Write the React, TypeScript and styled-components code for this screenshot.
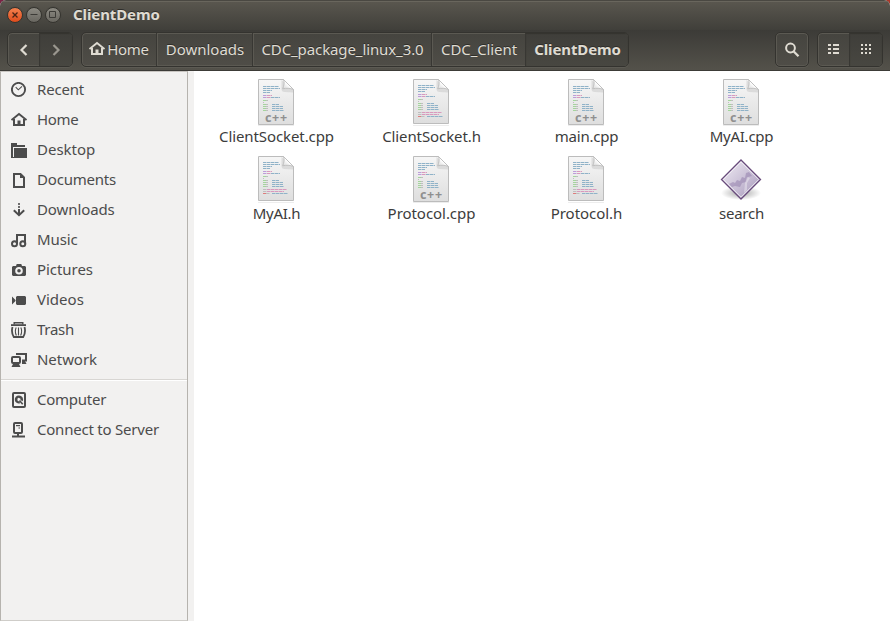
import React from "react";
import styled, { createGlobalStyle, css } from "styled-components";

const Global = createGlobalStyle`
  * { box-sizing: border-box; }
  html, body { margin: 0; padding: 0; }
  body { background: linear-gradient(90deg, #7b2445 0 50%, #ab392b 50%); overflow: hidden; }
  svg { display: block; flex: none; }
`;

const Window = styled.div`
  display: flex;
  flex-direction: column;
  width: 890px;
  height: 621px;
  overflow: hidden;
  border-radius: 6px 6px 0 0;
  background: #fff;
  font: 15px/20px "Noto Sans", "Open Sans", sans-serif;
  color: #3c3c3c;
`;

const TitleBar = styled.header`
  display: flex;
  align-items: center;
  gap: 3px;
  height: 30px;
  padding: 0 0 1px 7px;
  background: linear-gradient(#5a574f, #403f3a);
  border-top: 1px solid #4a4842;
  box-shadow: inset 0 1px #69665d;
`;

const WindowButton = styled.button<{ $close?: boolean }>`
  display: grid;
  place-items: center;
  width: 16px;
  height: 16px;
  padding: 0;
  border: 1px solid #35342f;
  border-radius: 50%;
  background: ${(p) => (p.$close ? "linear-gradient(#f4824f, #df4c1c)" : "linear-gradient(#8c8a82, #696760)")};
  box-shadow: 0 0 0 0.5px #4b4943;
`;

const Title = styled.h1`
  margin: 0 0 2px 9px;
  font-size: 15px;
  line-height: 20px;
  font-weight: 700;
  letter-spacing: -0.1px;
  color: #dfdbd2;
  text-shadow: 0 -1px #2f2e2a;
`;

const Toolbar = styled.nav`
  display: flex;
  align-items: flex-start;
  height: 41px;
  padding: 2px 7px 0;
  background: linear-gradient(#3c3b37, #53514a 39px);
  border-bottom: 1px solid #3c3b37;
`;

const ButtonGroup = styled.div<{ $gap?: number }>`
  display: flex;
  height: 35px;
  margin-left: ${(p) => p.$gap ?? 0}px;
  border: 1px solid #34332f;
  border-radius: 5px;
  background: linear-gradient(#45443f, #4f4d47);
  box-shadow: inset 0 0 0 1px #5b5952, 0 1px #5c5a53;
  overflow: hidden;
`;

const pressed = css`
  background: linear-gradient(#3f3e3a, #484741);
  box-shadow: inset 0 1px 1px #35342f;
`;

const ToolButton = styled.button<{ $w: number; $active?: boolean; $divided?: boolean }>`
  display: grid;
  place-items: center;
  width: ${(p) => p.$w}px;
  padding: 0;
  border: 0;
  border-left: ${(p) => (p.$divided ? "1px solid #383733" : "0")};
  background: none;
  color: #dfdbd2;
  ${(p) => p.$active && pressed}
`;

const Crumb = styled.button<{ $w: number; $track?: number; $active?: boolean; $first?: boolean }>`
  display: flex;
  align-items: center;
  justify-content: center;
  gap: 2px;
  width: ${(p) => p.$w}px;
  padding: 0 0 2px ${(p) => (p.$first ? 0 : 1)}px;
  border: 0;
  border-left: ${(p) => (p.$first ? "0" : "1px solid #383733")};
  box-shadow: ${(p) => (p.$first ? "none" : "inset 1px 0 #5b5952")};
  background: none;
  font: inherit;
  font-weight: ${(p) => (p.$active ? 700 : 400)};
  letter-spacing: ${(p) => p.$track ?? 0}px;
  color: #dfdbd2;
  text-shadow: 0 -1px #2f2e2a;
  white-space: nowrap;
  ${(p) => p.$active && pressed}
`;

const Spacer = styled.div`
  flex: 1;
`;

const Body = styled.div`
  display: flex;
  flex: 1;
  min-height: 0;
`;

const Sidebar = styled.aside`
  width: 188px;
  padding-top: 3px;
  border: 1px solid #b6b3ae;
  border-top-color: #c8c5c1;
  border-bottom-color: #cfcdc9;
  background: #f2f1f0;
`;

const Gutter = styled.div`
  width: 6px;
  background: #f2f1f0;
`;

const Place = styled.a`
  display: flex;
  align-items: center;
  gap: 10px;
  height: 30px;
  padding-left: 10px;
  color: #4c4c4c;
`;

const PlaceLabel = styled.span<{ $track: number }>`
  padding-bottom: 2px;
  letter-spacing: ${(p) => p.$track}px;
`;

const Separator = styled.hr`
  height: 2px;
  margin: 4px 0;
  border: 0;
  border-top: 1px solid #d8d6d3;
  background: #fff;
`;

const Files = styled.main`
  display: grid;
  grid-template-columns: repeat(4, 155px);
  grid-auto-rows: 77px;
  align-content: start;
  flex: 1;
  padding: 8px 0 0 5px;
`;

const File = styled.figure<{ $track: number }>`
  display: flex;
  flex-direction: column;
  align-items: center;
  margin: 0;
  letter-spacing: ${(p) => p.$track}px;
`;

const Thumb = styled.div`
  display: flex;
  justify-content: center;
  height: 47px;
  padding-right: 2px;
`;

type IconName =
  | "recent" | "home" | "desktop" | "documents" | "downloads" | "music"
  | "pictures" | "videos" | "trash" | "network" | "computer" | "server";

const glyphs: Record<IconName, React.ReactNode> = {
  recent: (
    <>
      <circle cx="7.5" cy="7.5" r="6.6" fill="none" stroke="currentColor" strokeWidth="1.9" />
      <path d="M4.7 5.2 7.3 7.8 11 4.3" fill="none" stroke="currentColor" strokeWidth="1.1" />
    </>
  ),
  home: (
    <>
      <path d="M.5 8 8 2l7.5 6" fill="none" stroke="currentColor" strokeWidth="1.9" />
      <path d="M3 7v6h10V7" fill="none" stroke="currentColor" strokeWidth="2" />
      <path d="M6.5 8.5h3V14h-3z" fill="currentColor" />
    </>
  ),
  desktop: (
    <>
      <path d="M0 1h6v2h8v2H2v10H0z" fill="currentColor" />
      <path d="M3 6h13v10H0v-1h3z" fill="currentColor" />
    </>
  ),
  documents: (
    <>
      <path d="M3 2h6.5L13 5.500V15H3z" fill="none" stroke="currentColor" strokeWidth="2" />
      <path d="M9 1v5h5z" fill="currentColor" />
    </>
  ),
  downloads: (
    <>
      <path d="M7 1h2v2H7zM7 4h2v2H7z" fill="currentColor" opacity=".8" />
      <path d="M8 7v6M2.800 8.300 8 13.200l5.200-4.900" fill="none" stroke="currentColor" strokeWidth="2" />
    </>
  ),
  music: (
    <>
      <path d="M6 11.500V3h8v8.500" fill="none" stroke="currentColor" strokeWidth="2" />
      <circle cx="3.500" cy="11.800" r="2.500" fill="none" stroke="currentColor" strokeWidth="2" />
      <circle cx="11.800" cy="11.800" r="2.500" fill="none" stroke="currentColor" strokeWidth="2" />
    </>
  ),
  pictures: (
    <path
      fillRule="evenodd"
      fill="currentColor"
      d="M2 4h3l.7-2h4.600l.7 2h3l1 1v8l-1 1H2l-1-1V5zM8 5a3.800 3.800 0 1 0 0 7.600A3.800 3.800 0 0 0 8 5zm0 2a1.800 1.800 0 1 1 0 3.600A1.800 1.800 0 0 1 8 7z"
    />
  ),
  videos: <path d="M1 4.500 4.500 8v1L1 12.500zM6 4h8l1 1v7l-1 1H6l-1-1V5z" fill="currentColor" />,
  trash: (
    <>
      <path d="M3.200 2.500V.7h8.600v1.800" fill="none" stroke="currentColor" strokeWidth="1.400" />
      <path d="M0 2.200h15V4H0z" fill="currentColor" />
      <path d="M1.500 5c-1 3.500-.5 7 1.300 10h9.400c1.800-3 2.300-6.500 1.300-10" fill="none" stroke="currentColor" strokeWidth="1.800" />
      <path d="M5.200 5.500c-1.200 2.500-1 5.500.2 8M9.800 5.500c1.200 2.500 1 5.500-.2 8M7.500 5.500v8" fill="none" stroke="currentColor" strokeWidth="1.100" />
    </>
  ),
  network: (
    <>
      <path d="M6 3V2h9v6.500h-4" fill="none" stroke="currentColor" strokeWidth="2" />
      <path d="M11 9h3l1.500 3H11z" fill="currentColor" />
      <rect x="1" y="5" width="8" height="6" rx="1" fill="none" stroke="currentColor" strokeWidth="2" />
      <path d="M2 12h6l1.500 3H.5z" fill="currentColor" />
    </>
  ),
  computer: (
    <>
      <rect x="2" y="1" width="12" height="14" rx="1" fill="none" stroke="currentColor" strokeWidth="2" />
      <path d="M8 3.500a4 4 0 1 0 1 7.800L8.500 9a1.600 1.600 0 1 1 1-1l2.200 1.200A4 4 0 0 0 8 3.500z" fill="currentColor" />
      <path d="m8.500 8.500 3.200 3.800" stroke="currentColor" strokeWidth="1.600" />
    </>
  ),
  server: (
    <>
      <rect x="3" y="1" width="8" height="10" rx="1" fill="none" stroke="currentColor" strokeWidth="2" />
      <path d="M5 3h4v1.200H5zM7.500 5.500H9v1H7.500zM6 11h2v3H6zM1 13.500h13v2H1z" fill="currentColor" />
    </>
  ),
};

const Glyph = ({ name }: { name: IconName }) => (
  <svg width="16" height="16" viewBox="0 0 16 16">{glyphs[name]}</svg>
);

const BLUE = "#8fb2c8";
const GREEN = "#a3d59b";
const GREY = "#bebebe";
const PINK = "#d999bd";
const PURPLE = "#bd9bda";
const RED = "#df7c7c";

type Stroke = [x: number, y: number, width: number, color: string];

const codeLines: Stroke[] = [
  [5, 7, 16, BLUE], [5, 9, 17, BLUE], [5, 11, 9, BLUE], [5, 13, 7, BLUE],
  [5, 16, 4, PURPLE], [9, 16, 5, PINK], [5, 18, 4, PURPLE], [9, 18, 4, PINK], [13, 18, 9, BLUE],
  [5, 21, 3, GREEN], [8, 21, 2, GREY], [5, 23, 1, GREY],
  [5, 25, 3, GREEN], [8, 25, 2, GREY], [14, 25, 7, BLUE],
  [5, 27, 3, GREEN], [8, 27, 2, GREY], [14, 27, 11, BLUE],
  [5, 29, 3, GREEN], [8, 29, 2, GREY], [14, 29, 11, BLUE],
  [5, 31, 3, GREEN], [8, 31, 2, GREY], [14, 31, 12, BLUE],
];

const headerLines: Stroke[] = [
  [5, 34, 4, GREY], [9, 34, 20, PINK], [5, 36, 4, GREY], [9, 36, 17, PINK],
  [5, 38, 3, RED], [8, 38, 4, GREY], [14, 38, 16, BLUE],
];

const SourceIcon = ({ cpp }: { cpp: boolean }) => {
  const lift = cpp ? 0 : 1;
  return (
    <svg width="38" height="48" viewBox="-1 0 38 48">
      <defs>
        <linearGradient id="paper" x1="0" y1="0" x2="0" y2="1">
          <stop offset="0" stopColor="#f6f6f6" />
          <stop offset="1" stopColor="#dedede" />
        </linearGradient>
        <linearGradient id="fold" x1="0" y1="1" x2="1" y2="0">
          <stop offset="0" stopColor="#d4d4d4" />
          <stop offset=".5" stopColor="#fff" />
        </linearGradient>
      </defs>
      <path d="M0 46.500h36" stroke="#000" strokeOpacity=".07" />
      <path d={`M.5.5h25l10 10V${cpp ? 45.5 : 44.5}H.5z`} fill="url(#paper)" stroke="#bcbcbc" />
      <path d="M23.500 1v9q0 3 3 3l9 .500v-3z" fill="#bbb" opacity=".4" />
      <path d="M25.500.5c1.200 3 .5 6-.8 9.300 4-.8 7-.8 10.800.7z" fill="url(#fold)" stroke="#bcbcbc" strokeWidth=".9" />
      {[...codeLines, ...(cpp ? [] : headerLines)].map(([x, y, w, color]) => (
        <path key={`${x}-${y}`} d={`M${x} ${y - lift + 0.5}h${w}`} stroke={color} strokeDasharray="3.500 .5" />
      ))}
      {cpp && (
        <text x="7" y="43" fontSize="12.500" fontWeight="700" fill="#8f8f8f" fontFamily="Noto Sans, sans-serif" textLength="22">
          c++
        </text>
      )}
    </svg>
  );
};

const ProgramIcon = () => (
  <svg width="46" height="48" viewBox="0 0 46 48">
    <defs>
      <linearGradient id="gem" x1="0" y1="0" x2="1" y2="1">
        <stop offset="0" stopColor="#f3eff6" />
        <stop offset="1" stopColor="#a596ba" />
      </linearGradient>
      <radialGradient id="ground">
        <stop offset="0" stopColor="#000" stopOpacity=".35" />
        <stop offset="1" stopColor="#000" stopOpacity="0" />
      </radialGradient>
    </defs>
    <ellipse cx="23" cy="37" rx="20" ry="7" fill="url(#ground)" />
    <path d="M23 4 42.500 23.500 23 43 3.500 23.500z" fill="url(#gem)" stroke="#684b7b" strokeWidth="1.300" />
    <path d="M23 5.800 40.700 23.500 23 41.200 5.300 23.500z" fill="none" stroke="#fff" strokeOpacity=".7" />
    <path d="m11 28 4-2 2 1 2-3 3 1 2-4 3 1 1-5 3-1 3 4-4 1-2 5-4 1-2 4-5-1-3 1z" fill="#8a74a4" opacity=".45" />
    <path d="m29 21 3 1-3 5v7l-3 3 1-10z" fill="#fff" opacity=".35" />
  </svg>
);

const places: [IconName, string, number][] = [
  ["recent", "Recent", -0.2],
  ["home", "Home", -0.3],
  ["desktop", "Desktop", 0],
  ["documents", "Documents", -0.2],
  ["downloads", "Downloads", -0.1],
  ["music", "Music", -0.1],
  ["pictures", "Pictures", -0.05],
  ["videos", "Videos", 0],
  ["trash", "Trash", -0.3],
  ["network", "Network", -0.05],
];

const devices: [IconName, string, number][] = [
  ["computer", "Computer", -0.25],
  ["server", "Connect to Server", -0.22],
];

const files: [string, number][] = [
  ["ClientSocket.cpp", -0.1],
  ["ClientSocket.h", -0.1],
  ["main.cpp", -0.2],
  ["MyAI.cpp", -0.25],
  ["MyAI.h", -0.3],
  ["Protocol.cpp", -0.05],
  ["Protocol.h", -0.05],
  ["search", -0.25],
];

const PlaceRow = ({ place: [icon, label, track] }: { place: [IconName, string, number] }) => (
  <Place>
    <Glyph name={icon} />
    <PlaceLabel $track={track}>{label}</PlaceLabel>
  </Place>
);

export default function App() {
  return (
    <>
      <Global />
      <Window>
        <TitleBar>
          <WindowButton $close aria-label="Close">
            <svg width="8" height="8" viewBox="0 0 8 8"><path d="m1.500 1.500 5 5m0-5-5 5" stroke="#4a2415" strokeWidth="1.300" /></svg>
          </WindowButton>
          <WindowButton aria-label="Minimize">
            <svg width="8" height="8" viewBox="0 0 8 8"><path d="M.5 3.500h7" stroke="#3c3b37" /></svg>
          </WindowButton>
          <WindowButton aria-label="Maximize">
            <svg width="8" height="8" viewBox="0 0 8 8"><path d="M.5 .5h6v6h-6z" fill="none" stroke="#3c3b37" /></svg>
          </WindowButton>
          <Title>ClientDemo</Title>
        </TitleBar>
        <Toolbar>
          <ButtonGroup>
            <ToolButton $w={31} aria-label="Back">
              <svg width="14" height="14" viewBox="0 0 14 14"><path d="M9.500 2 4.500 7l5 5" fill="none" stroke="currentColor" strokeWidth="2.200" /></svg>
            </ToolButton>
            <ToolButton $w={33} $active $divided aria-label="Forward">
              <svg width="14" height="14" viewBox="0 0 14 14"><path d="m4.500 2 5 5-5 5" fill="none" stroke="#9a978f" strokeWidth="2.200" /></svg>
            </ToolButton>
          </ButtonGroup>
          <ButtonGroup $gap={8}>
            <Crumb $w={74} $track={-0.3} $first>
              <Glyph name="home" />
              Home
            </Crumb>
            <Crumb $w={96}>Downloads</Crumb>
            <Crumb $w={179} $track={-0.1}>CDC_package_linux_3.0</Crumb>
            <Crumb $w={94} $track={-0.1}>CDC_Client</Crumb>
            <Crumb $w={103} $track={-0.1} $active>ClientDemo</Crumb>
          </ButtonGroup>
          <Spacer />
          <ButtonGroup>
            <ToolButton $w={32} aria-label="Search">
              <svg width="16" height="16" viewBox="0 0 16 16">
                <circle cx="6.500" cy="6" r="4.400" fill="none" stroke="currentColor" strokeWidth="2" />
                <path d="m9.500 9.300 5 5" stroke="currentColor" strokeWidth="2.300" />
              </svg>
            </ToolButton>
          </ButtonGroup>
          <ButtonGroup $gap={8}>
            <ToolButton $w={31} aria-label="List view">
              <svg width="13" height="11" viewBox="0 0 13 11"><path d="M1 0h3v2H1zM6 0h6v2H6zM1 4h3v2H1zM6 4h6v2H6zM1 8h3v2H1zM6 8h6v2H6z" fill="currentColor" /></svg>
            </ToolButton>
            <ToolButton $w={33} $active $divided aria-label="Icon view">
              <svg width="10" height="11" viewBox="0 0 10 11"><path d="M0 0h2v2H0zM4 0h2v2H4zM8 0h2v2H8zM0 4h2v2H0zM4 4h2v2H4zM8 4h2v2H8zM0 8h2v2H0zM4 8h2v2H4zM8 8h2v2H8z" fill="currentColor" /></svg>
            </ToolButton>
          </ButtonGroup>
        </Toolbar>
        <Body>
          <Sidebar>
            {places.map((place) => <PlaceRow key={place[0]} place={place} />)}
            <Separator />
            {devices.map((place) => <PlaceRow key={place[0]} place={place} />)}
          </Sidebar>
          <Gutter />
          <Files>
            {files.map(([name, track]) => (
              <File key={name} $track={track}>
                <Thumb>{name === "search" ? <ProgramIcon /> : <SourceIcon cpp={name.endsWith(".cpp")} />}</Thumb>
                <figcaption>{name}</figcaption>
              </File>
            ))}
          </Files>
        </Body>
      </Window>
    </>
  );
}
